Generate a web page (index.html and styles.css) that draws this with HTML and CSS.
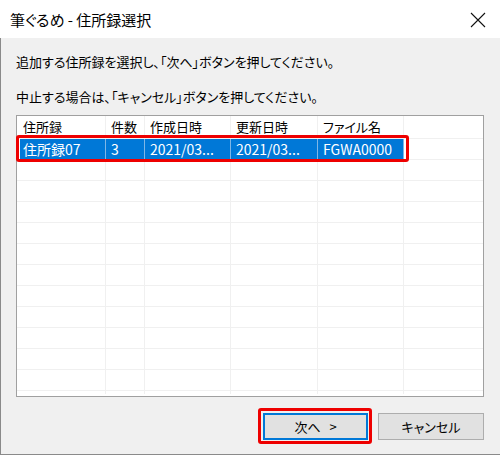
FILE: index.html
```html
<!DOCTYPE html>
<html lang="ja">
<head>
<meta charset="utf-8">
<title>筆ぐるめ - 住所録選択</title>
<link rel="stylesheet" href="styles.css">
</head>
<body>
<div class="window">
  <div class="titlebar">
    <span class="title">筆ぐるめ - 住所録選択</span>
    <svg class="close" width="16" height="16" viewBox="0 0 16 16" aria-label="閉じる">
      <path d="M1 1 L15 15 M15 1 L1 15" stroke="#111" stroke-width="1.1" fill="none"/>
    </svg>
  </div>
  <div class="content">
    <p class="msg first">追加する住所録を選択し、「次へ」ボタンを押してください。</p>
    <p class="msg second">中止する場合は、「キャンセル」ボタンを押してください。</p>
    <div class="list">
      <div class="row head">
        <div class="cell c1">住所録</div>
        <div class="cell c2">件数</div>
        <div class="cell c3">作成日時</div>
        <div class="cell c4">更新日時</div>
        <div class="cell c5">ファイル名</div>
        <div class="cell c6"></div>
      </div>
      <div class="rows">
        <div class="row sel">
          <div class="cell c1">住所録07</div>
          <div class="cell c2">3</div>
          <div class="cell c3">2021/03...</div>
          <div class="cell c4">2021/03...</div>
          <div class="cell c5">FGWA0000</div>
          <div class="cell c6"></div>
        </div>
        <div class="row"><div class="cell c1"></div><div class="cell c2"></div><div class="cell c3"></div><div class="cell c4"></div><div class="cell c5"></div><div class="cell c6"></div></div>
        <div class="row"><div class="cell c1"></div><div class="cell c2"></div><div class="cell c3"></div><div class="cell c4"></div><div class="cell c5"></div><div class="cell c6"></div></div>
        <div class="row"><div class="cell c1"></div><div class="cell c2"></div><div class="cell c3"></div><div class="cell c4"></div><div class="cell c5"></div><div class="cell c6"></div></div>
        <div class="row"><div class="cell c1"></div><div class="cell c2"></div><div class="cell c3"></div><div class="cell c4"></div><div class="cell c5"></div><div class="cell c6"></div></div>
        <div class="row"><div class="cell c1"></div><div class="cell c2"></div><div class="cell c3"></div><div class="cell c4"></div><div class="cell c5"></div><div class="cell c6"></div></div>
        <div class="row"><div class="cell c1"></div><div class="cell c2"></div><div class="cell c3"></div><div class="cell c4"></div><div class="cell c5"></div><div class="cell c6"></div></div>
        <div class="row"><div class="cell c1"></div><div class="cell c2"></div><div class="cell c3"></div><div class="cell c4"></div><div class="cell c5"></div><div class="cell c6"></div></div>
        <div class="row"><div class="cell c1"></div><div class="cell c2"></div><div class="cell c3"></div><div class="cell c4"></div><div class="cell c5"></div><div class="cell c6"></div></div>
        <div class="row"><div class="cell c1"></div><div class="cell c2"></div><div class="cell c3"></div><div class="cell c4"></div><div class="cell c5"></div><div class="cell c6"></div></div>
        <div class="row"><div class="cell c1"></div><div class="cell c2"></div><div class="cell c3"></div><div class="cell c4"></div><div class="cell c5"></div><div class="cell c6"></div></div>
        <div class="row"><div class="cell c1"></div><div class="cell c2"></div><div class="cell c3"></div><div class="cell c4"></div><div class="cell c5"></div><div class="cell c6"></div></div>
        <div class="row"><div class="cell c1"></div><div class="cell c2"></div><div class="cell c3"></div><div class="cell c4"></div><div class="cell c5"></div><div class="cell c6"></div></div>
      </div>
      <div class="mark row-mark"></div>
    </div>
    <div class="buttons">
      <div class="btn-wrap">
        <button class="btn default">次へ&nbsp;&nbsp;<span class="gt">&gt;</span></button>
        <div class="mark btn-mark"></div>
      </div>
      <button class="btn">キャンセル</button>
    </div>
  </div>
</div>
</body>
</html>
```
FILE: styles.css
```css
* { box-sizing: border-box; }
html, body { margin: 0; padding: 0; background: #fff; }
body {
  font-family: "Noto Sans CJK JP", "Noto Sans", sans-serif;
  color: #000;
}
.window {
  width: 500px;
  height: 455px;
  display: flex;
  flex-direction: column;
  background: #fff;
}
.titlebar {
  height: 38px;
  flex: none;
  display: flex;
  align-items: center;
  justify-content: space-between;
  padding: 0 14px 0 10px;
  background: #fff;
}
.title {
  font-size: 15px;
  line-height: 20px;
  font-feature-settings: "palt";
  margin-top: 1px;
}
.close { display: block; margin-top: 1px; }
.content {
  flex: 1;
  background: #f0f0f0;
  border-left: 1px solid #8a8a8a;
  border-bottom: 1px solid #8a8a8a;
  padding: 0 16px 0 15px;
  display: flex;
  flex-direction: column;
  font-size: 13px;
}
.msg {
  margin: 0;
  line-height: 20px;
  font-size: 13px;
  font-feature-settings: "palt";
}
.msg.first { margin-top: 14px; }
.msg.second { margin-top: 15px; }
.list {
  position: relative;
  margin-top: 8px;
  width: 468px;
  height: 282px;
  background: #fff;
  border: 1px solid #a0a0a0;
}
.row {
  display: flex;
  height: 21px;
  border-top: 1px solid #f0f0f0;
}
.row.head {
  height: 22px;
  border-top: none;
}
.rows {
  height: 256px;
  overflow: hidden;
}
.cell {
  flex: none;
  height: 100%;
  border-right: 1px solid #f0f0f0;
  padding-left: 5px;
  font-size: 14px;
  line-height: 20px;
  white-space: nowrap;
  overflow: hidden;
}
.head .cell {
  font-size: 13px;
  line-height: 22px;
  font-feature-settings: "palt";
}
.c1 { width: 89px; padding-left: 6px; }
.c2 { width: 39px; }
.c3 { width: 86px; }
.c4 { width: 87px; }
.c5 { width: 86px; }
.c6 { flex: 1; border-right: none; }
.row.sel .cell {
  background: #0078d7;
  color: #fff;
  border-right-color: #7fb6e6;
}
.row.sel .c1 {
  border-left: 3px solid #fff;
  padding-left: 3px;
}
.row.sel .c6 { background: #fff; }
.mark {
  position: absolute;
  border: 3px solid #ee0000;
  border-radius: 3px;
  pointer-events: none;
}
.row-mark {
  left: -1px;
  top: 19px;
  width: 393px;
  height: 27px;
}
.buttons {
  display: flex;
  justify-content: flex-end;
  gap: 10px;
  margin-top: 16px;
}
.btn-wrap { position: relative; }
.btn {
  display: block;
  width: 106px;
  height: 27px;
  background: #e1e1e1;
  border: 1px solid #adadad;
  font-family: "Noto Sans CJK JP", "Noto Sans", sans-serif;
  font-size: 13px;
  color: #000;
  padding: 0;
  line-height: 20px;
  font-feature-settings: "palt";
}
.btn .gt { margin-left: 3px; }
.btn.default {
  width: 105px;
  border: 2px solid #0078d7;
}
.btn-mark {
  left: -5px;
  top: -5px;
  right: -4px;
  bottom: -4px;
}
```
